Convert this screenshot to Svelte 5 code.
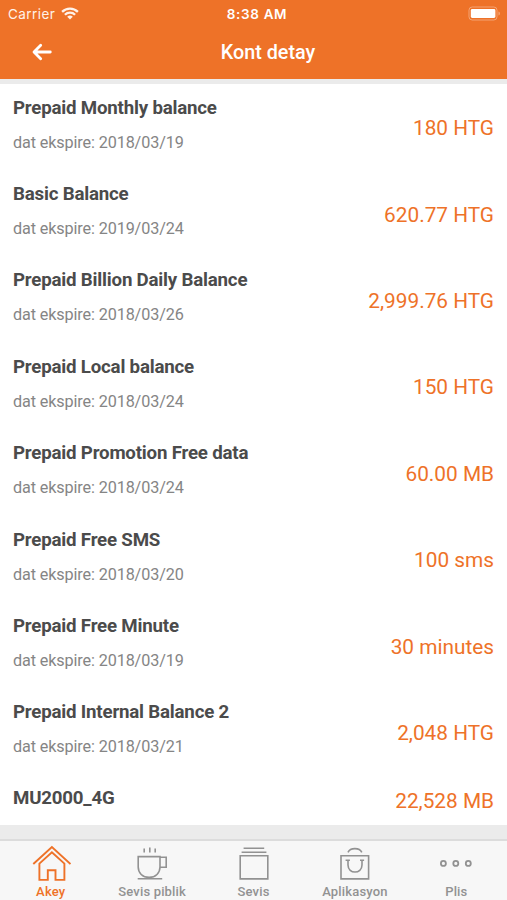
<script lang="ts">
	type Account = { name: string; expires?: string; value: string };

	const accounts: Account[] = [
		{ name: "Prepaid Monthly balance", expires: "2018/03/19", value: "180 HTG" },
		{ name: "Basic Balance", expires: "2019/03/24", value: "620.77 HTG" },
		{ name: "Prepaid Billion Daily Balance", expires: "2018/03/26", value: "2,999.76 HTG" },
		{ name: "Prepaid Local balance", expires: "2018/03/24", value: "150 HTG" },
		{ name: "Prepaid Promotion Free data", expires: "2018/03/24", value: "60.00 MB" },
		{ name: "Prepaid Free SMS", expires: "2018/03/20", value: "100 sms" },
		{ name: "Prepaid Free Minute", expires: "2018/03/19", value: "30 minutes" },
		{ name: "Prepaid Internal Balance 2", expires: "2018/03/21", value: "2,048 HTG" },
		{ name: "MU2000_4G", value: "22,528 MB" },
	];

	const tabs = [
		{ id: "home", label: "Akey" },
		{ id: "public", label: "Sevis piblik" },
		{ id: "services", label: "Sevis" },
		{ id: "apps", label: "Aplikasyon" },
		{ id: "more", label: "Plis" },
	];

	let active = $state("home");
</script>

<div class="screen">
	<header>
		<div class="status">
			<div class="carrier">
				<span>Carrier</span>
				<svg width="18" height="13" viewBox="0 0 18 13" fill="none" stroke="currentColor" stroke-width="2.3">
					<path d="M1.1 4.9a11.2 11.2 0 0 1 15.8 0" />
					<path d="M3.9 7.8a7.2 7.2 0 0 1 10.2 0" />
					<path d="M9 12.6 6.2 9.8a4 4 0 0 1 5.6 0z" fill="currentColor" stroke="none" />
				</svg>
			</div>
			<span class="time">8:38 AM</span>
			<svg class="battery" width="33" height="15" viewBox="0 0 33 15">
				<rect x="1" y="1" width="28" height="13" rx="3.2" fill="none" stroke="#fff" stroke-opacity=".35" />
				<rect x="2.8" y="3" width="24.6" height="9" rx="1.4" fill="#fff" />
				<path d="M30.5 5.5c1.8.5 1.8 3.5 0 4z" fill="#fff" fill-opacity=".4" />
			</svg>
		</div>
		<div class="nav">
			<button class="back" aria-label="Back">
				<svg width="20" height="18" viewBox="0 0 20 18" fill="none" stroke="currentColor" stroke-width="2.8" stroke-linecap="round" stroke-linejoin="round">
					<path d="M8.7 2.2 2 9l6.7 6.8M2.3 9h16" />
				</svg>
			</button>
			<h1>Kont detay</h1>
		</div>
	</header>

	<main>
		{#each accounts as account}
			<div class="row" class:short={!account.expires}>
				<div class="info">
					<p class="name">{account.name}</p>
					{#if account.expires}
						<p class="date">dat ekspire: {account.expires}</p>
					{/if}
				</div>
				<span class="value">{account.value}</span>
			</div>
		{/each}
	</main>

	<nav class="tabs">
		{#each tabs as tab}
			<button class="tab" class:active={active === tab.id} onclick={() => (active = tab.id)}>
				<svg width="40" height="40" viewBox="0 0 40 40" fill="none" stroke="currentColor" stroke-width="1.6">
					{#if tab.id === "home"}
						<g stroke-width="1.9">
							<path d="M2.3 23 20.9 6l18.6 17" />
							<path d="M8.4 22.6v16.3h8.4V29.2h7.7v9.7h8.9V22.6L20.9 11.3z" />
						</g>
					{:else if tab.id === "public"}
						<path d="M6.2 15.6H28V26c0 6-4.4 10.4-10.9 10.4S6.2 32 6.2 26zM28 16.2h6.2v10.1H28M5.7 37.8h24.5" />
						<path d="M12.2 7.6v3.9M17.8 6.4v5.2M23.2 7.6v3.9" />
					{:else if tab.id === "services"}
						<path d="M6.2 14.8h27.6v23.1H6.2zM7.6 11.2h24.8M9.6 7.3h20.6" />
					{:else if tab.id === "apps"}
						<path d="M6 14.8h27.6v23.1H6zM13 11.4c2.2-5 11.6-5 13.8 0" />
						<path d="M13 18.9v5.2c0 9.2 14 9.2 14 0v-5.2M10.6 19.2h4.3M25 19.2h4.1" />
					{:else}
						<g stroke-width="1.8">
							<circle cx="7.4" cy="22.4" r="2.5" />
							<circle cx="19.8" cy="22.4" r="2.5" />
							<circle cx="32.3" cy="22.4" r="2.5" />
						</g>
					{/if}
				</svg>
				<span>{tab.label}</span>
			</button>
		{/each}
	</nav>
</div>

<style>
	:global(body) {
		margin: 0;
	}

	.screen {
		--orange: #ee7228;

		display: flex;
		flex-direction: column;
		height: 900px;
		overflow: hidden;
		font-family: Roboto, sans-serif;
		background: #ebebeb;
	}

	h1,
	p {
		margin: 0;
	}

	button {
		padding: 0;
		border: 0;
		background: none;
		font: inherit;
		color: inherit;
		cursor: pointer;
	}

	header {
		flex: none;
		height: 79px;
		color: #fff;
		background: var(--orange);
	}

	.status {
		display: grid;
		grid-template-columns: 1fr auto 1fr;
		align-items: center;
		height: 27px;
		padding: 0 6px 0 8px;
		font-family: Inter, sans-serif;
		font-size: 13.5px;
	}

	.carrier {
		display: flex;
		align-items: center;
		gap: 6px;
		letter-spacing: 0.45px;
		color: #fff2e9;
	}

	.time {
		padding-left: 5px;
		font-weight: 600;
		letter-spacing: 0.65px;
	}

	.battery {
		justify-self: end;
	}

	.nav {
		display: grid;
		grid-template-columns: 84px 1fr 55px;
		align-items: center;
		height: 50px;
	}

	.back {
		display: flex;
		justify-content: center;
	}

	h1 {
		text-align: center;
		font-size: 19.8px;
		font-weight: 500;
	}

	main {
		flex: none;
		margin-top: 5px;
		background: #fff;
	}

	.row {
		display: flex;
		align-items: center;
		justify-content: space-between;
		box-sizing: border-box;
		height: 86.4px;
		padding: 0 13px;
	}

	.row.short {
		height: 49.8px;
	}

	.info {
		display: flex;
		flex-direction: column;
		gap: 11px;
		padding-bottom: 4px;
	}

	.name {
		font-size: 18.7px;
		line-height: 24px;
		font-weight: 700;
		letter-spacing: -0.2px;
		color: #4b4b4b;
	}

	.date {
		font-size: 16.2px;
		line-height: 24px;
		letter-spacing: -0.12px;
		color: #858585;
	}

	.value {
		padding-top: 2px;
		font-size: 20.8px;
		color: var(--orange);
	}

	.tabs {
		display: flex;
		flex: none;
		box-sizing: border-box;
		height: 61px;
		margin-top: auto;
		border-top: 2px solid #dcdcdc;
		background: #f7f7f7;
	}

	.tab {
		display: flex;
		flex: 1;
		flex-direction: column;
		align-items: center;
		gap: 3px;
		font-family: Roboto, sans-serif;
		font-size: 13px;
		line-height: 16px;
		font-weight: 500;
		letter-spacing: 0.17px;
		color: #929292;
	}

	.tab.active {
		color: var(--orange);
	}
</style>
